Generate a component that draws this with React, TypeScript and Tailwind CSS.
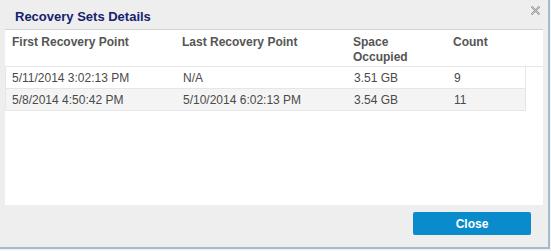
export default function App() {
  const rows = [
    { first: "5/11/2014 3:02:13 PM", last: "N/A", space: "3.51 GB", count: "9" },
    { first: "5/8/2014 4:50:42 PM", last: "5/10/2014 6:02:13 PM", space: "3.54 GB", count: "11" },
  ];

  return (
    <div className="w-[551px] h-[251px] bg-[#f3f5f8] font-['Liberation_Sans',Arial,sans-serif]">
      <div className="w-[550px] h-[249px] bg-[#eeeeee] border-r-2 border-b-2 border-[#a8b8cd] flex flex-col">
        {/* Title bar */}
        <div className="h-[29px] flex items-start justify-between pl-[15px] pr-[8px]">
          <h1 className="pt-[9px] text-[13px] leading-[16px] font-bold text-[#15226e]">
            Recovery Sets Details
          </h1>
          <button className="mt-[6px] w-[9px] h-[9px]" aria-label="close">
            <svg viewBox="0 0 9 9" width="9" height="9">
              <path d="M0.5 0.5 L8.5 8.5 M8.5 0.5 L0.5 8.5" stroke="#8a8a8a" strokeWidth="1.8" fill="none" />
              <path d="M0.5 0.5 L8.5 8.5 M8.5 0.5 L0.5 8.5" stroke="#eeeeee" strokeWidth="0.6" fill="none" />
            </svg>
          </button>
        </div>

        {/* Content */}
        <div className="mx-[5px] h-[176px] bg-white border-t border-[#d3d3d3]">
          <div className="grid grid-cols-[170px_171px_100px_1fr] h-[37px] border-b border-[#e6e6e6] text-[12px] leading-[15px] font-bold text-[#555555]">
            <div className="pl-[7px] pt-[5px]">First Recovery Point</div>
            <div className="pl-[7px] pt-[5px]">Last Recovery Point</div>
            <div className="pl-[7px] pt-[5px]">Space<br />Occupied</div>
            <div className="pl-[7px] pt-[5px]">Count</div>
          </div>
          <div className="mr-[17px]">
            {rows.map((r, i) => (
              <div
                key={i}
                className={`grid grid-cols-[170px_171px_100px_1fr] h-[22px] items-center border-x border-b border-[#e6e6e6] text-[12px] text-[#4a4a4a] ${
                  i % 2 === 1 ? "bg-[#f4f4f4]" : "bg-white"
                }`}
              >
                <div className="pl-[6px]">{r.first}</div>
                <div className="pl-[7px]">{r.last}</div>
                <div className="pl-[7px]">{r.space}</div>
                <div className="pl-[7px]">{r.count}</div>
              </div>
            ))}
          </div>
        </div>

        {/* Footer */}
        <div className="flex justify-end pr-[17px] pt-[7px]">
          <button className="w-[118px] h-[23px] rounded-[2px] bg-[#0a8bcc] text-white text-[12px] font-bold">
            Close
          </button>
        </div>
      </div>
    </div>
  );
}
